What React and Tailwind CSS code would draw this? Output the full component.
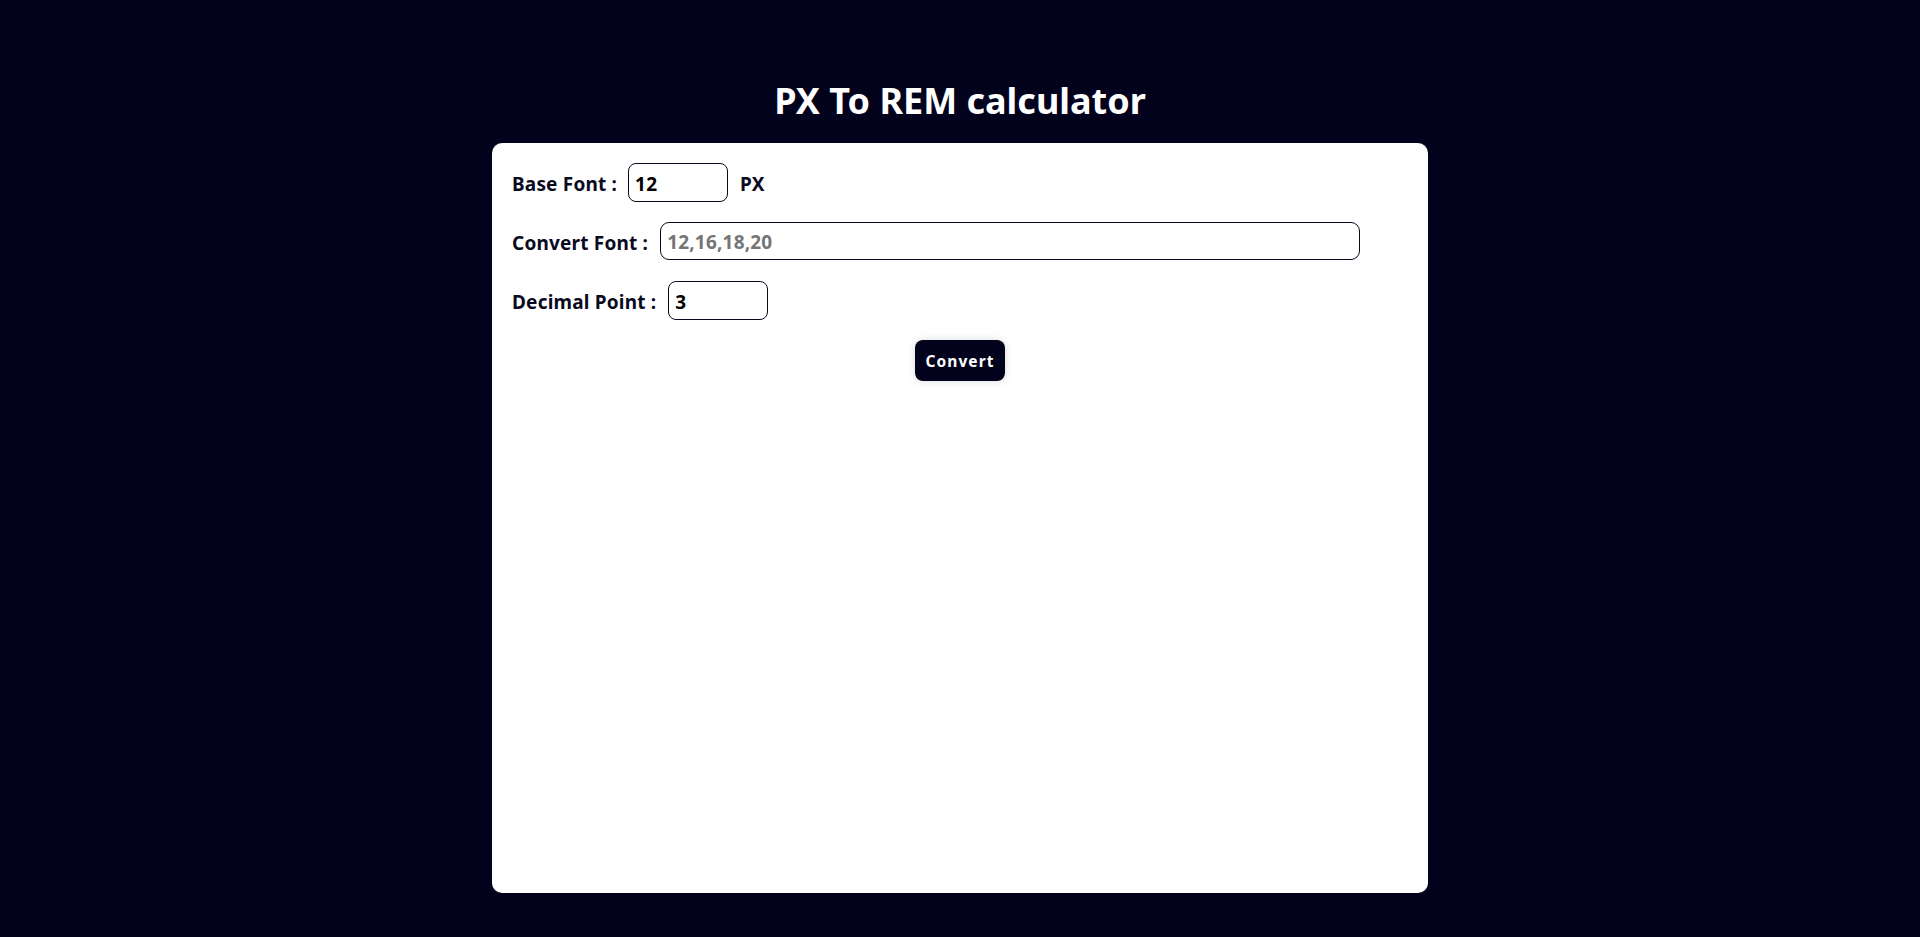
import React, { useState } from "react";

const font = "font-['Noto_Sans',sans-serif]";

const App = () => {
  const [base, setBase] = useState("12");
  const [sizes, setSizes] = useState("");
  const [decimal, setDecimal] = useState("3");

  return (
    <div className={`min-h-screen w-full bg-[#02021d] ${font} flex flex-col items-center`}>
      {/* Title */}
      <h1 className="mt-[79px] text-[36px] leading-[44px] font-bold text-white">
        PX To REM calculator
      </h1>

      {/* Card */}
      <div className="mt-[20px] w-[936px] h-[750px] bg-white rounded-[10px] pl-[20px] pt-[20px]">
        <div className="flex items-center gap-[11px] text-[19px] font-bold text-[#0a0a1f] tracking-[0.01em]">
          <span className="pt-[4px]">Base Font :</span>
          <input
            value={base}
            onChange={(e) => setBase(e.target.value)}
            className="w-[100px] h-[39px] border border-[#0a0a1f] rounded-[8px] px-[6px] pt-[2px] text-[19px] font-bold text-black outline-none"
          />
          <span className="ml-[1px] pt-[4px]">PX</span>
        </div>

        <div className="flex items-center gap-[12px] mt-[20px] text-[19px] font-bold text-[#0a0a1f] tracking-[0.01em]">
          <span className="pt-[4px]">Convert Font :</span>
          <input
            value={sizes}
            onChange={(e) => setSizes(e.target.value)}
            placeholder="12,16,18,20"
            className="w-[700px] h-[38px] border border-[#0a0a1f] rounded-[9px] px-[6px] pt-[2px] text-[19px] font-bold text-black placeholder:text-[#757575] outline-none"
          />
        </div>

        <div className="flex items-center gap-[12px] mt-[21px] text-[19px] font-bold text-[#0a0a1f] tracking-[0.01em]">
          <span className="pt-[4px]">Decimal Point :</span>
          <input
            value={decimal}
            onChange={(e) => setDecimal(e.target.value)}
            className="w-[100px] h-[39px] border border-[#0a0a1f] rounded-[8px] px-[6px] pt-[2px] text-[19px] font-bold text-black outline-none"
          />
        </div>

        <div className="flex justify-center pr-[20px] mt-[20px]">
          <button className="w-[90px] h-[41px] pt-[3px] bg-[#02021d] text-white text-[15.5px] font-bold tracking-[0.07em] rounded-[8px] shadow-[0_0_8px_rgba(0,0,0,0.15)]">
            Convert
          </button>
        </div>
      </div>
    </div>
  );
};

export default App;
